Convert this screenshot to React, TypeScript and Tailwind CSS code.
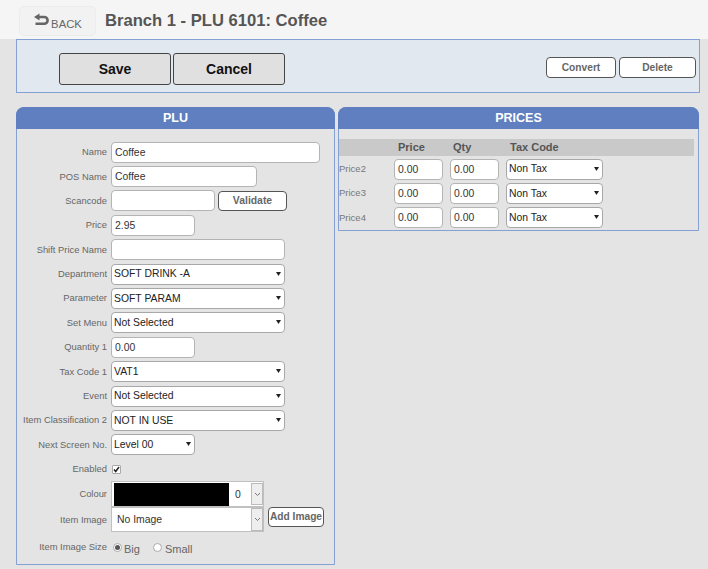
import React from "react";

const font = "font-['Liberation_Sans',Arial,sans-serif]";

function Field({ label, children }: { label: string; children: React.ReactNode }) {
  return (
    <div className="flex items-center h-[24.4px]">
      <label className="w-[91px] -ml-[8px] shrink-0 whitespace-nowrap text-right text-[9.4px] text-[#666] mr-[4px] flex justify-end">{label}</label>
      {children}
    </div>
  );
}

function TextBox({ value, w }: { value: string; w: string }) {
  return (
    <input
      readOnly
      value={value}
      className={`${w} h-[21px] rounded-[4px] border border-[#b4b4b4] bg-white px-[3px] text-[10.4px] text-[#333] outline-none`}
    />
  );
}

function Select({ value, w }: { value: string; w: string }) {
  return (
    <div className={`${w} relative h-[21px]`}>
      <select
        value={value}
        onChange={() => {}}
        className="block h-full w-full appearance-none rounded-[4px] border border-[#a8a8a8] bg-white pl-[2px] text-[10.4px] text-[#222] outline-none"
      >
        <option>{value}</option>
      </select>
      <svg className="pointer-events-none absolute right-[4px] top-[8px]" width="5" height="4" viewBox="0 0 5 4">
        <path d="M0 0h5L2.5 4z" fill="#222" />
      </svg>
    </div>
  );
}

function Chevron() {
  return (
    <svg width="7" height="5" viewBox="0 0 7 5" fill="none">
      <path d="M1 1l2.5 2.5L6 1" stroke="#777" strokeWidth="1" />
    </svg>
  );
}

function PanelTitle({ children }: { children: React.ReactNode }) {
  return (
    <div className="h-[22px] -mx-px -mt-px rounded-t-[8px] bg-[#5f7fc0] text-center text-[12.5px] font-bold leading-[22px] text-white">
      {children}
    </div>
  );
}

function SmallButton({ children, w }: { children: React.ReactNode; w: string }) {
  return (
    <button className={`${w} h-[21px] rounded-[4px] border border-[#555] bg-white text-[10.2px] font-bold text-[#666]`}>
      {children}
    </button>
  );
}

function BigButton({ children }: { children: React.ReactNode }) {
  return (
    <button className="h-[32px] w-[112px] rounded-[3px] border border-[#444] bg-[#e0e0e0] text-[14px] font-bold text-[#111]">
      {children}
    </button>
  );
}

function PriceRow({ label }: { label: string }) {
  return (
    <div className="flex h-[24.4px] items-center">
      <span className="w-[55px] text-[9.5px] text-[#777]">{label}</span>
      <TextBox value="0.00" w="w-[49px]" />
      <div className="w-[7px]" />
      <TextBox value="0.00" w="w-[49px]" />
      <div className="w-[7px]" />
      <Select value="Non Tax" w="w-[97px]" />
    </div>
  );
}

export default function App() {
  return (
    <div className={`${font} h-[569px] w-[708px] overflow-hidden bg-[#e4e4e4]`}>
      <header className="flex h-[39px] items-start bg-[#f5f5f5] pl-[19px] pt-[6px]">
        <div className="flex h-[30px] w-[77px] items-start justify-center gap-[2px] rounded-[5px] border border-[#ececec] bg-[#f2f2f2] pt-[6px] text-[11.3px] text-[#666]">
          <svg width="16" height="14" viewBox="0 0 16 14" className="shrink-0">
            <path d="M1 4L6.5 .5v7z" fill="#666" />
            <path d="M5 4h6.2a3.4 3.4 0 0 1 0 6.8H2.5" fill="none" stroke="#666" strokeWidth="2.6" />
          </svg>
          <span className="mt-[3px]">BACK</span>
        </div>
        <h1 className="ml-[9px] mt-[3px] text-[16.6px] font-bold text-[#555]">Branch 1 - PLU 6101: Coffee</h1>
      </header>

      <div className="ml-[16px] flex h-[54px] w-[684px] items-start border border-[#85a0d2] bg-[#e1e8ef] pl-[42px] pr-[3px] pt-[13px]">
        <div className="flex gap-[2px]">
          <BigButton>Save</BigButton>
          <BigButton>Cancel</BigButton>
        </div>
        <div className="ml-auto mt-[4px] flex gap-[3px]">
          <SmallButton w="w-[70px]">Convert</SmallButton>
          <SmallButton w="w-[77px]">Delete</SmallButton>
        </div>
      </div>

      <div className="ml-[16px] mt-[14px] flex items-start gap-[3px]">
        <section className="h-[458px] w-[319px] rounded-t-[8px] border border-[#85a0d2]">
          <PanelTitle>PLU</PanelTitle>
          <div className="pl-[7px] pt-[11px]">
            <Field label="Name"><TextBox value="Coffee" w="w-[209px]" /></Field>
            <Field label="POS Name"><TextBox value="Coffee" w="w-[146px]" /></Field>
            <Field label="Scancode">
              <TextBox value="" w="w-[104px]" />
              <button className="ml-[3px] h-[20px] w-[69px] rounded-[4px] border border-[#555] bg-white text-[10.4px] font-bold text-[#666]">Validate</button>
            </Field>
            <Field label="Price"><TextBox value="2.95" w="w-[84px]" /></Field>
            <Field label="Shift Price Name"><TextBox value="" w="w-[174px]" /></Field>
            <Field label="Department"><Select value="SOFT DRINK -A" w="w-[174px]" /></Field>
            <Field label="Parameter"><Select value="SOFT PARAM" w="w-[174px]" /></Field>
            <Field label="Set Menu"><Select value="Not Selected" w="w-[174px]" /></Field>
            <Field label="Quantity 1"><TextBox value="0.00" w="w-[84px]" /></Field>
            <Field label="Tax Code 1"><Select value="VAT1" w="w-[174px]" /></Field>
            <Field label="Event"><Select value="Not Selected" w="w-[174px]" /></Field>
            <Field label="Item Classification 2"><Select value="NOT IN USE" w="w-[174px]" /></Field>
            <Field label="Next Screen No."><Select value="Level 00" w="w-[84px]" /></Field>
            <Field label="Enabled">
              <span className="ml-[1px] flex h-[9px] w-[9px] items-center justify-center rounded-[1px] border border-[#aaa] bg-white">
                <svg width="7" height="7" viewBox="0 0 7 7"><path d="M1 3.5l1.7 2L6 1" stroke="#222" strokeWidth="1.5" fill="none" /></svg>
              </span>
            </Field>
            <div>
              <div className="flex h-[26px] items-center">
                <span className="-ml-[8px] mr-[4px] w-[91px] shrink-0 text-right text-[9.4px] text-[#666]">Colour</span>
                <div className="flex h-[26px] w-[153px] items-center border border-[#c0c0c0] bg-white pl-[2px]">
                  <div className="h-[23px] w-[115px] bg-black" />
                  <span className="ml-[6px] w-[14px] text-[10.4px] text-[#333]">0</span>
                  <span className="ml-auto flex h-[22px] w-[12px] items-center justify-center border border-[#bbb] bg-[#eee]"><Chevron /></span>
                </div>
              </div>
              <div className="flex h-[25px] items-center">
                <span className="-ml-[8px] mr-[4px] w-[91px] shrink-0 text-right text-[9.4px] text-[#666]">Item Image</span>
                <div className="flex h-[25px] w-[153px] items-center border border-[#c0c0c0] bg-white pl-[5px]">
                  <span className="text-[10.4px] text-[#333]">No Image</span>
                  <span className="ml-auto flex h-[23px] w-[12px] items-center justify-center border border-[#bbb] bg-[#eee]"><Chevron /></span>
                </div>
                <button className="ml-[4px] mb-[6px] h-[20px] w-[56px] shrink-0 whitespace-nowrap rounded-[4px] border border-[#555] bg-white text-[10.2px] font-bold leading-none text-[#666]">Add Image</button>
              </div>
            </div>
            <div className="mt-[3px] flex h-[24px] items-center">
              <span className="-ml-[8px] mr-[4px] flex w-[91px] shrink-0 justify-end whitespace-nowrap text-right text-[9.4px] text-[#666]">Item Image Size</span>
              <span className="ml-[2px] flex h-[9px] w-[9px] items-center justify-center rounded-full border border-[#aaa] bg-white">
                <span className="h-[5px] w-[5px] rounded-full bg-[#555]" />
              </span>
              <span className="ml-[2px] mt-[3px] text-[11px] text-[#666]">Big</span>
              <span className="ml-[13px] h-[9px] w-[9px] rounded-full border border-[#aaa] bg-white" />
              <span className="ml-[3px] mt-[3px] text-[11px] text-[#666]">Small</span>
            </div>
          </div>
        </section>

        <section className="h-[124px] w-[361px] rounded-t-[8px] border border-[#85a0d2]">
          <PanelTitle>PRICES</PanelTitle>
          <div className="pt-[10px]">
            <div className="mr-[4px] flex h-[17px] items-center bg-[#c9c9c9] text-[11px] font-bold text-[#555]">
              <span className="ml-[59px] w-[55px]">Price</span>
              <span className="w-[57px]">Qty</span>
              <span>Tax Code</span>
            </div>
            <div className="pt-[1px]">
              <PriceRow label="Price2" />
              <PriceRow label="Price3" />
              <PriceRow label="Price4" />
            </div>
          </div>
        </section>
      </div>
    </div>
  );
}
